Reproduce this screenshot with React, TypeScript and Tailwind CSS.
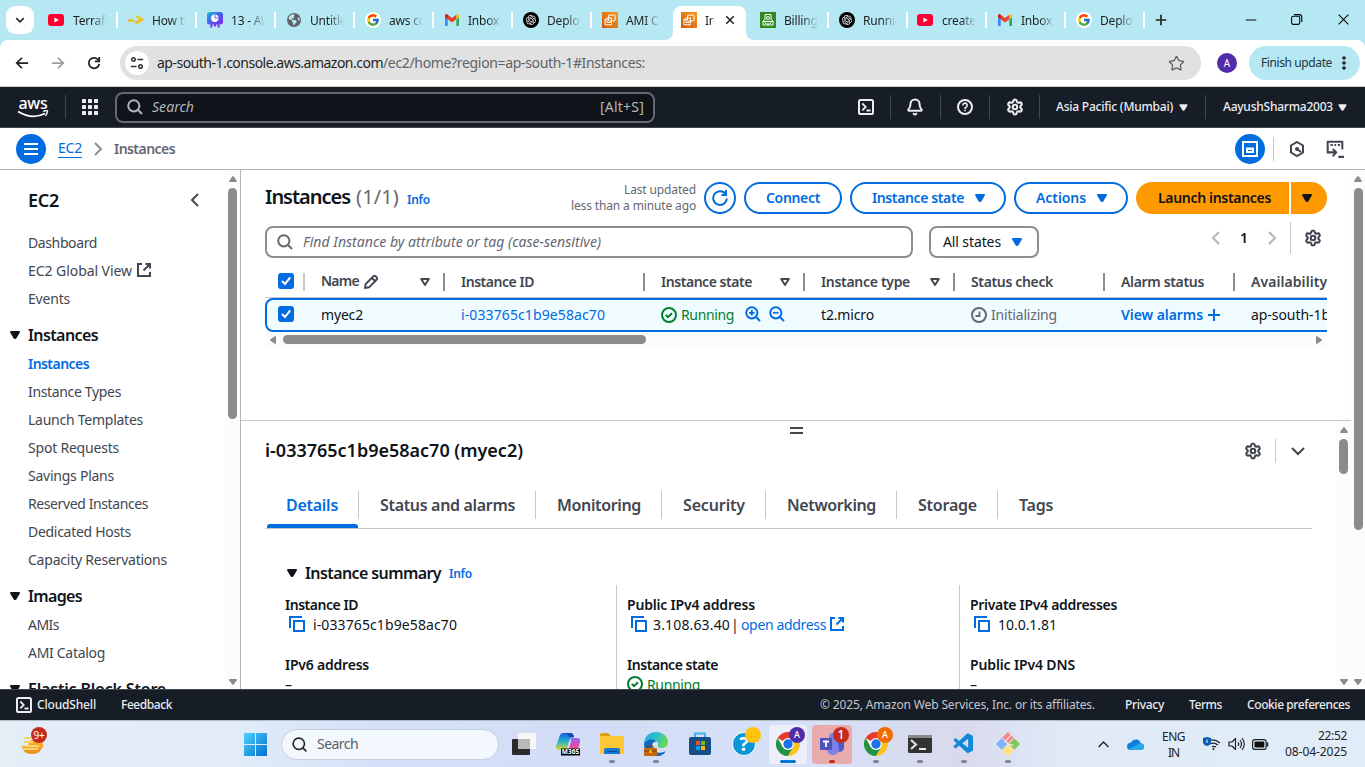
import { useLayoutEffect, useRef, useState, type ReactNode } from 'react';
import { Settings, Search as SearchIcon, Bell, Star } from 'lucide-react';
import { FcGoogle } from 'react-icons/fc';
import { RiOpenaiFill } from 'react-icons/ri';
import { FaEarthAmericas } from 'react-icons/fa6';
import { VscVscode } from 'react-icons/vsc';

/* Text fitted to a given width by letter spacing. */
function T({ w, children, className = '' }: { w: number; children: string; className?: string }) {
  const ref = useRef<HTMLSpanElement>(null);
  const [space, setSpace] = useState(0);
  useLayoutEffect(() => {
    if (ref.current) setSpace((w - ref.current.getBoundingClientRect().width) / children.length);
  }, [w, children]);
  return (
    <span className={`block shrink-0 whitespace-nowrap ${className}`} style={{ width: w }}>
      <span ref={ref} className="inline-block whitespace-pre" style={{ letterSpacing: space }}>{children}</span>
    </span>
  );
}

function Icon({ children, size = 16, className = '', sw = 2 }: { children: ReactNode; size?: number; className?: string; sw?: number }) {
  return (
    <svg viewBox="0 0 16 16" width={size} height={size} fill="none" stroke="currentColor" strokeWidth={sw} className={`block shrink-0 ${className}`}>
      {children}
    </svg>
  );
}
const Caret = ({ className = '', size = 16 }: { className?: string; size?: number }) => (
  <Icon size={size} className={className}><path d="M4 5h8l-3.6 6h-.8z" fill="currentColor" strokeWidth="2" strokeLinejoin="round" /></Icon>
);
const SortCaret = ({ className = '' }: { className?: string }) => (
  <Icon className={className}><path d="M4.2 5h7.6L8 11z" strokeLinejoin="round" /></Icon>
);
const External = ({ className = '' }: { className?: string }) => (
  <Icon className={className}><path d="M14 10v4H2V2h4M9.5 2H14v4.5M14 2 7.5 8.5" /></Icon>
);
const Magnifier = ({ className = '', children }: { className?: string; children?: ReactNode }) => (
  <Icon className={className}><circle cx="6.8" cy="6.8" r="5.6" /><path d="m11 11 4 4" />{children}</Icon>
);
const Shell = () => (
  <Icon><rect x="1" y="1" width="14" height="14" rx="1.6" /><path d="m4.3 4.5 3.4 3.4-3.4 3.4M8.5 11.5h4" strokeWidth="1.8" /></Icon>
);
const Copy = () => (
  <Icon className="text-[#006ce0]"><path d="M1 12V1h12" /><rect x="5" y="5" width="10" height="10" /></Icon>
);
const Running = ({ textClass = '' }: { textClass?: string }) => (
  <div className="flex items-center text-[#00802f]">
    <Icon><circle cx="8" cy="8" r="7" /><path d="m4.8 8 2.2 2.2 4-4" /></Icon>
    <T w={53} className={`ml-1 ${textClass}`}>Running</T>
  </div>
);
const Check = ({ className = '' }: { className?: string }) => (
  <div className={`flex h-4 w-4 shrink-0 items-center justify-center rounded-[3px] bg-[#006ce0] text-white ${className}`}>
    <Icon><path d="m4 8 3 3 5.2-6.6" /></Icon>
  </div>
);
const Chevron = ({ d, className = '', size = 16 }: { d: string; className?: string; size?: number }) => (
  <Icon className={className} size={size}><path d={d} /></Icon>
);
const Arrow = ({ dir }: { dir: 'up' | 'down' | 'left' | 'right' }) => (
  <svg viewBox="0 0 10 8" width="10" height="8" className={`block ${{ up: '', down: 'rotate-180', left: '-rotate-90', right: 'rotate-90' }[dir]}`}>
    <path d="M4.3 1.4Q5 .5 5.7 1.4L8.8 5.8Q9.2 7 8 7H2Q.8 7 1.2 5.8Z" fill="#8b8b8b" />
  </svg>
);

/* ---------- browser ---------- */
const YouTube = () => (
  <svg viewBox="0 0 16 16" width="16" height="16" className="-ml-[2px] shrink-0"><rect y="2" width="16" height="12" rx="3" fill="#ff0033" /><path d="m6.4 5.4 4.4 2.6-4.4 2.6z" fill="#fff" /></svg>
);
const Gmail = () => (
  <svg viewBox="0 0 16 16" width="16" height="16"><path d="M1 14h2.7V7.3L1 5z" fill="#4285f4" /><path d="M12.3 14H15V5l-2.7 2.3z" fill="#34a853" /><path d="M1 5.2V4c0-1.7 1.7-2 2.7-1.3L8 6l4.3-3.3v4.6L8 10.5 3.7 7.3z" fill="#ea4335" /><path d="M12.3 7.3V2.7C13.5 1.9 15 2.5 15 4v1.3z" fill="#fbbc04" /><path d="M1 5.2V4c0-1.5 1.5-2.1 2.7-1.3v4.6z" fill="#c5221f" /></svg>
);
const Google = () => <div className="flex h-4 w-4 items-center justify-center rounded-full bg-white"><FcGoogle size={14} /></div>;
const OpenAI = () => <div className="flex h-4 w-4 items-center justify-center rounded-full bg-black"><RiOpenaiFill size={12} color="#fff" /></div>;
const Ec2 = () => (
  <svg viewBox="0 0 16 16" width="16" height="16" fill="none" stroke="#fff" strokeWidth="1"><defs><linearGradient id="ec2" x1="0" y1="1" x2="1" y2="0"><stop stopColor="#cc5a10" /><stop offset="1" stopColor="#f99a1c" /></linearGradient></defs><rect width="16" height="16" fill="url(#ec2)" stroke="none" /><rect x="6.5" y="3" width="6.5" height="6" rx="1" /><path d="M9.5 11.5v1.3h-6.500V7h1.500" /><path d="M5 6h4.500v4.500H5z" /></svg>
);
const Billing = () => (
  <svg viewBox="0 0 16 16" width="16" height="16" fill="none" stroke="#fff" strokeWidth="1"><rect width="16" height="16" fill="#2f8a22" stroke="none" /><path d="M5 8V2.500h6V8M3 9.500h10M3 13h10M3 9.500l1.500-2M13 9.500l-1.500-2M3 9.500V13M13 9.500V13M5 10.500l1 1.500h4l1-1.500" /><circle cx="8" cy="6" r="1.500" /></svg>
);
const Slides = () => (
  <svg viewBox="0 0 16 16" width="16" height="16"><defs><linearGradient id="sl" x1="0" y1="0" x2="1" y2="1"><stop stopColor="#10bfd0" /><stop offset=".55" stopColor="#4f56f0" /><stop offset="1" stopColor="#8a2be8" /></linearGradient></defs><rect width="16" height="12.500" rx="2.500" fill="url(#sl)" /><path d="m5 12-1 3.500M11 12l1 3.500M8 12v2.500" stroke="#7b36ec" strokeWidth="2" /><circle cx="7.800" cy="6.300" r="3.700" fill="#fff" /><path d="M8 6V3M8 6h3" stroke="#4c6bf0" strokeWidth="1" /></svg>
);
const Dash = () => (
  <svg viewBox="0 0 16 16" width="16" height="16" fill="none" strokeWidth="2"><path d="M0 8.500h6M7 10.500l7-3" stroke="#f7b500" /><path d="m8 4 6.500 3.500L8 12" stroke="#fbbf24" /></svg>
);
const tabs: [string, ReactNode][] = [
  ['Terrafor', <YouTube />], ['How to', <Dash />], ['13 - AW', <Slides />], ['Untitled', <FaEarthAmericas size={14} color="#5f6368" />],
  ['aws con', <Google />], ['Inbox (', <Gmail />], ['Deploy', <OpenAI />], ['AMI Ca', <Ec2 />], ['Ins', <Ec2 />], ['Billing a', <Billing />],
  ['Runnin', <OpenAI />], ['create e', <YouTube />], ['Inbox (', <Gmail />], ['Deploy', <Google />],
];

function TabStrip() {
  return (
    <div className="flex h-10 shrink-0 items-end bg-[#b5e8f3]">
      <div className="mb-[6px] ml-[6px] flex h-7 w-7 items-center justify-center rounded-[9px] bg-white"><Chevron size={12} d="m3 5.500 5 5 5-5" className="text-[#222]" /></div>
      <div className="ml-[3px] flex">
        {tabs.map(([name, icon], i) => {
          const active = i === 8;
          return (
            <div key={i} className="relative flex h-[34px] w-[79px] items-center pb-[6px] pl-3">
              {i > 0 && i !== 8 && i !== 9 && <div className="absolute top-[6px] left-0 h-4 w-[2px] bg-white" />}
              {active && (
                <svg viewBox="0 0 90 34" width="90" height="34" className="absolute top-0 left-[-5px]"><path d="M0 34Q9 34 9 25V9Q9 0 18 0H73Q82 0 82 9V25Q82 34 91 34z" fill="#fff" /></svg>
              )}
              <div className="relative flex h-4 w-4 items-center justify-center">{icon}</div>
              <div className={`relative mt-[2px] ml-2 overflow-hidden text-[12px] leading-4 tracking-[-0.2px] whitespace-nowrap text-[#1f1f1f] [mask-image:linear-gradient(90deg,#000_55%,transparent)] ${active ? 'w-[10px]' : 'w-[34px]'}`}>{name}</div>
              {active && <Icon size={12} className="relative ml-[9px] text-[#222]"><path d="m3 3 10 10M13 3 3 13" /></Icon>}
            </div>
          );
        })}
      </div>
      <div className="flex h-[34px] items-start"><div className="mt-[6px] h-4 w-[2px] bg-white" /></div>
      <Icon size={12} className="mb-[14px] ml-[10px] text-[#222]"><path d="M8 1v14M1 8h14" strokeWidth="2.200" /></Icon>
      <div className="mb-[14px] ml-[78px] flex items-center gap-[33px] text-black">
        <Icon size={12} sw={1.300}><path d="M1 8h14" /></Icon>
        <Icon size={13} sw={1.300}><rect x="2" y="4" width="10" height="10" rx="2" /><path d="M5 2h6q3.500 0 3.500 3.500V11" /></Icon>
        <Icon size={13} sw={1.300} className="ml-px"><path d="m2 2 12 12M14 2 2 14" /></Icon>
      </div>
    </div>
  );
}

function Toolbar() {
  return (
    <div className="shrink-0 bg-[#b5e8f3]">
      <div className="flex h-[47px] items-center rounded-t-[8px] border-b border-[#c9c9c9] bg-white">
        <Icon size={14} sw={2} className="ml-[15px] text-[#222]"><path d="M15 8H2M8 2 2 8l6 6" /></Icon>
        <Icon size={14} sw={2} className="ml-[22px] text-[#9a9a9a]"><path d="M1 8h13M8 2l6 6-6 6" /></Icon>
        <Icon size={14} sw={2} className="ml-[22px] text-[#222]"><path d="M14 9A6 6 0 1 1 12.500 4L14 6M14 1v5H9" /></Icon>
        <div className="ml-[19px] flex h-[34px] w-[1081px] items-center rounded-full bg-[#e1e1e1]">
          <div className="ml-[5px] flex h-6 w-6 items-center justify-center rounded-full bg-white text-[#333]">
            <Icon size={14} sw={1.800}><circle cx="4" cy="4" r="2" /><path d="M8.500 4H15M1 12h6.500" /><circle cx="12" cy="12" r="2" /></Icon>
          </div>
          <T w={226} className="-mt-[2px] ml-2 text-[14px] text-[#1f1f1f]">ap-south-1.console.aws.amazon.com</T>
          <T w={262} className="-mt-[2px] text-[14px] text-[#5f6368]">/ec2/home?region=ap-south-1#Instances:</T>
          <Star size={17} strokeWidth={1.900} color="#5f6368" className="ml-[523px]" />
        </div>
        <div className="ml-4 flex h-5 w-5 items-center justify-center rounded-full bg-[#512da8] text-[10px] text-white">A</div>
        <div className="ml-3 flex h-[34px] w-[111px] items-center rounded-full bg-[#b5e8f3] text-[12px] text-[#26363a]">
          <T w={71} className="ml-3">Finish update</T>
          <svg width="4" height="16" className="ml-[10px]" fill="#222"><circle cx="2" cy="3" r="1.800" /><circle cx="2" cy="8" r="1.800" /><circle cx="2" cy="13" r="1.800" /></svg>
        </div>
      </div>
    </div>
  );
}

/* ---------- console ---------- */
const NavLine = ({ className }: { className: string }) => <div className={`h-6 w-px bg-[#424650] ${className}`} />;

function AwsNav() {
  return (
    <div className="flex h-[41px] shrink-0 items-center border-b border-[#424650] bg-[#161d26] text-[#ebebf0]">
      <div className="ml-[17px] flex w-[32px] flex-col items-center">
        <T w={29} className="text-[16px] leading-[12px] font-medium text-white">aws</T>
        <svg viewBox="0 0 32 8" width="32" height="8" fill="none" stroke="#fff" className="mt-[1px]"><path d="M1 1.500Q15 10 28 3.500" strokeWidth="1.800" /><path d="M26 1.500Q31-.5 30.500 1.500T28.500 6" strokeWidth="1.300" /></svg>
      </div>
      <NavLine className="ml-4" />
      <svg width="16" height="16" className="ml-4" fill="#ebebf0">{[0, 6, 12].map(y => [0, 6, 12].map(x => <rect key={`${x}${y}`} x={x} y={y} width="4" height="4" rx=".6" />))}</svg>
      <div className="ml-[17px] flex h-[31px] w-[540px] items-center rounded-[8px] border-2 border-[#656871] bg-[#0f141a] text-[14px] text-[#b4b4bb]">
        <Magnifier className="ml-[10px]" />
        <T w={42} className="-mt-px ml-[9px] italic">Search</T>
        <T w={44} className="-mt-px ml-[406px]">[Alt+S]</T>
      </div>
      <div className="ml-[203px]"><Shell /></div>
      <NavLine className="ml-4" />
      <Bell size={18} strokeWidth={2.700} className="ml-[15px]" />
      <NavLine className="ml-4" />
      <Icon className="ml-4"><circle cx="8" cy="8" r="7" /><path d="M5.800 6.500a2.200 2.200 0 1 1 3.300 1.800Q8 9 8 10M8 10.800v1.500" strokeWidth="1.700" /></Icon>
      <NavLine className="ml-4" />
      <Settings size={18} strokeWidth={2.800} className="ml-4" />
      <NavLine className="ml-[15px]" />
      <T w={117} className="ml-4 text-[12px] font-medium">Asia Pacific (Mumbai)</T>
      <Caret size={13} className="ml-[4px]" />
      <NavLine className="ml-[15px]" />
      <T w={110} className="ml-[17px] text-[12px] font-medium">AayushSharma2003</T>
      <Caret size={13} className="ml-[3px]" />
    </div>
  );
}

function Breadcrumb() {
  return (
    <div className="flex h-[42px] shrink-0 items-center border-b border-[#b4b4bb] text-[14px]">
      <div className="ml-4 flex h-[30px] w-[30px] items-center justify-center rounded-full bg-[#006ce0] text-white"><Icon><path d="M1 3h14M1 8h14M1 13h14" /></Icon></div>
      <T w={24} className="ml-3 border-b border-[#006ce0] leading-[18px] text-[#006ce0]">EC2</T>
      <Chevron className="ml-2 text-[#8c8c94]" d="m5 2 6 6-6 6" />
      <T w={61} className="ml-2 font-semibold text-[#656871]">Instances</T>
      <div className="ml-[1060px] flex h-[30px] w-[30px] items-center justify-center rounded-full bg-[#006ce0] text-white"><Icon><path d="M1 1h14v14H1z" /><path d="M5 8h6v3H5zM4 7.500h8" /></Icon></div>
      <div className="ml-2 h-6 w-px bg-[#c6c6cd]" />
      <Icon className="ml-[15px] text-[#424650]"><path d="m8 1 6 3.500v7L8 15l-6-3.500v-7z" /><circle cx="8" cy="8" r="2" fill="currentColor" stroke="none" /><path d="m8 8 4 3" /></Icon>
      <Icon size={18} className="ml-[21px] text-[#424650]" sw={1.800}><path d="M4 11H1.500V1.500h13v7M4 4.500h2M7.500 4.500h1.500M10.500 4.500h2M4 11h4M6 8l3 3-3 3.500M11 15h5" /></Icon>
    </div>
  );
}

const Link = ({ w, children }: { w: number; children: string }) => <div className="flex h-7 items-center pl-7"><T w={w}>{children}</T></div>;
const Group = ({ w, children, className = '' }: { w: number; children: string; className?: string }) => (
  <div className={`flex h-[29px] items-center pl-[7px] text-[16px] font-semibold text-[#0f141a] ${className}`}><Caret /><T w={w} className="ml-[5px]">{children}</T></div>
);

function Sidebar() {
  return (
    <div className="flex h-full w-[241px] shrink-0 border-r border-[#b4b4bb]">
      <div className="h-full w-[225px] overflow-hidden text-[14px] text-[#424650]">
        <div className="flex h-[58px] items-center pt-[2px] pl-7 text-[18px] font-semibold text-[#0f141a]"><T w={31} className="mt-px">EC2</T><Chevron className="ml-32 text-[#424650]" d="M11 2 5 8l6 6" /></div>
        <Link w={69}>Dashboard</Link>
        <div className="flex h-7 items-center pl-7"><T w={104}>EC2 Global View</T><External className="ml-1" /></div>
        <Link w={42}>Events</Link>
        <Group w={70} className="mt-2">Instances</Group>
        <div className="flex h-7 items-center pl-7 font-semibold text-[#006ce0]"><T w={61}>Instances</T></div>
        <Link w={93}>Instance Types</Link>
        <Link w={115}>Launch Templates</Link>
        <Link w={91}>Spot Requests</Link>
        <Link w={86}>Savings Plans</Link>
        <Link w={120}>Reserved Instances</Link>
        <Link w={103}>Dedicated Hosts</Link>
        <Link w={139}>Capacity Reservations</Link>
        <Group w={54} className="mt-2">Images</Group>
        <Link w={31}>AMIs</Link>
        <Link w={77}>AMI Catalog</Link>
        <Group w={138} className="mt-2">Elastic Block Store</Group>
      </div>
      <div className="flex w-[15px] flex-col items-center bg-[#fcfcfc] pt-[5px] pb-[3px]"><Arrow dir="up" /><div className="mt-[5px] h-[231px] w-[9px] rounded-full bg-[#8b8b8b]" /><div className="mt-auto"><Arrow dir="down" /></div></div>
    </div>
  );
}

const btn = 'flex h-8 shrink-0 items-center rounded-full border-2 border-[#006ce0] text-[14px] font-semibold text-[#006ce0]';

function InstancesHeader() {
  return (
    <>
      <div className="mt-3 ml-6 flex h-8 items-center">
        <T w={85} className="-mt-[2px] text-[20px] font-semibold text-[#0f141a]">Instances</T>
        <T w={43} className="-mt-[2px] ml-[6px] text-[20px] text-[#656871]">(1/1)</T>
        <T w={23} className="mt-1 ml-2 text-[12px] font-semibold text-[#006ce0]">Info</T>
        <div className="ml-[141px] flex flex-col items-end text-[12px] leading-4 text-[#656871]"><T w={72}>Last updated</T><T w={125}>less than a minute ago</T></div>
        <div className={`${btn} ml-2 w-8 justify-center`}><Icon><path d="M14.800 8.500A6.800 6.800 0 1 1 13.800 4.500M9.500 5H14V0" /></Icon></div>
        <div className={`${btn} ml-2 w-[98px] justify-center`}><T w={54} className="-mt-[2px]">Connect</T></div>
        <div className={`${btn} ml-2 w-[156px]`}><T w={92} className="-mt-[2px] ml-5">Instance state</T><Caret className="ml-2" /></div>
        <div className={`${btn} ml-2 w-[114px]`}><T w={50} className="-mt-[2px] ml-5">Actions</T><Caret className="ml-2" /></div>
        <div className="ml-2 flex h-8 w-[153px] items-center justify-center rounded-l-full bg-[#ff9900] text-[14px] font-semibold text-[#0f141a]"><T w={113} className="-mt-[2px] ml-1">Launch instances</T></div>
        <div className="ml-[2px] flex h-8 w-9 items-center rounded-r-full bg-[#ff9900] pl-2 text-[#0f141a]"><Caret /></div>
      </div>
      <div className="mt-3 ml-6 flex h-8 text-[14px]">
        <div className="flex h-8 w-[648px] items-center rounded-[8px] border-2 border-[#8c8c94] text-[#656871]"><Magnifier className="ml-[10px]" /><T w={298} className="-mt-[2px] ml-[10px] italic">Find Instance by attribute or tag (case-sensitive)</T></div>
        <div className="ml-4 flex h-8 w-[110px] items-center rounded-[8px] border-2 border-[#8c8c94] text-[#0f141a]"><T w={58} className="-mt-[2px] ml-[12px]">All states</T><Caret className="ml-2 text-[#006ce0]" /></div>
        <div className="-mt-1 ml-[169px] flex h-8 items-center">
          <Chevron className="text-[#b4b4bb]" d="M11 2 5 8l6 6" />
          <div className="-mt-[2px] w-10 text-center font-semibold text-[#0f141a]">1</div>
          <Chevron className="text-[#b4b4bb]" d="m5 2 6 6-6 6" />
          <div className="ml-[10px] h-8 w-px bg-[#c6c6cd]" />
          <Settings size={18} strokeWidth={2.800} className="ml-[13px] text-[#424650]" />
        </div>
      </div>
    </>
  );
}

const Th = ({ w, children, sort, className }: { w: number; children: string; sort?: boolean; className: string }) => (
  <div className={`flex h-[34px] shrink-0 items-center pt-[2px] pl-4 ${className}`}><T w={w}>{children}</T><div className="ml-auto flex items-center gap-[10px]">{sort && <SortCaret />}<div className="h-[18px] w-[2px] bg-[#8c8c94]" /></div></div>
);

function InstancesTable() {
  return (
    <div className="mt-[6px] ml-6 w-[1062px] overflow-hidden text-[14px]">
      <div className="flex h-[34px] w-[1180px] items-center border-b border-[#c6c6cd] font-semibold text-[#424650]">
        <div className="flex w-10 shrink-0 items-center"><Check className="ml-[13px]" /><div className="mt-[2px] ml-[9px] h-[18px] w-[2px] bg-[#c6c6cd]" /></div>
        <div className="flex w-[140px] shrink-0 items-center pl-4">
          <T w={38}>Name</T><Icon className="mt-[2px] ml-1" sw={1.900}><path d="m2 14 .7-4L10.500 2.200q1-.9 2 0l1.300 1.300q.9 1 0 2L6 13.300zM9 4l3 3" strokeLinejoin="round" /></Icon>
          <div className="mt-[2px] ml-auto flex items-center gap-[10px]"><SortCaret /><div className="h-[18px] w-[2px] bg-[#8c8c94]" /></div>
        </div>
        <Th w={73} className="w-[200px]">Instance ID</Th>
        <Th w={91} sort className="w-40">Instance state</Th>
        <Th w={89} sort className="w-[150px]">Instance type</Th>
        <Th w={82} className="w-[150px]">Status check</Th>
        <Th w={83} className="w-[130px]">Alarm status</Th>
        <Th w={114} className="w-[180px]">Availability Zone</Th>
      </div>
      <div className="flex h-[34px] w-[1180px] items-center rounded-[8px] border-2 border-[#006ce0] bg-[#f0fbff] text-[#0f141a]">
        <Check className="-mt-[2px] ml-[11px]" />
        <T w={42} className="-mt-[2px] ml-[27px]">myec2</T>
        <T w={144} className="-mt-[2px] ml-[98px] text-[#006ce0]">i-033765c1b9e58ac70</T>
        <div className="ml-14 flex items-center"><Running textClass="-mt-[2px]" /></div>
        <Magnifier className="-mt-[2px] ml-[11px] text-[#006ce0]"><path d="M4 6.800h5.600M6.800 4v5.600" strokeWidth="1.800" /></Magnifier>
        <Magnifier className="-mt-[2px] ml-2 text-[#006ce0]"><path d="M4 6.800h5.600" strokeWidth="1.800" /></Magnifier>
        <T w={53} className="-mt-[2px] ml-[36px]">t2.micro</T>
        <div className="ml-[97px] flex items-center text-[#656871]"><Icon><circle cx="8" cy="8" r="7" /><path d="M8.500 4.500V9H4.500" strokeWidth="1.800" /></Icon><T w={66} className="-mt-[2px] ml-1">Initializing</T></div>
        <T w={82} className="-mt-[2px] ml-16 font-semibold text-[#006ce0]">View alarms</T>
        <Icon className="ml-[3px] text-[#006ce0]"><path d="M8 2v12M2 8h12" /></Icon>
        <T w={79} className="-mt-[2px] ml-[29px]">ap-south-1b</T>
      </div>
      <div className="flex h-[15px] items-center bg-[#fcfcfc]"><div className="ml-[3px]"><Arrow dir="left" /></div><div className="ml-[5px] h-[9px] w-[363px] rounded-full bg-[#8b8b8b]" /><div className="mr-[3px] ml-auto"><Arrow dir="right" /></div></div>
    </div>
  );
}

const detailTabs: [string, number, string, string][] = [
  ['Status and alarms', 135, 'w-[177px]', ''], ['Monitoring', 84, 'w-[126px]', ''], ['Security', 62, 'w-[104px]', ''],
  ['Networking', 89, 'w-[131px]', ''], ['Storage', 59, 'w-[101px]', ''], ['Tags', 34, 'w-[80px]', 'end'],
];

function Details() {
  const label = 'flex h-5 items-center font-semibold';
  const value = 'flex h-5 items-center';
  return (
    <div className="flex min-h-0 flex-1 border-t border-[#c6c6cd]">
      <div className="min-w-0 flex-1 overflow-hidden text-[14px] text-[#0f141a]">
        <div className="mt-[6px] ml-[549px] flex h-[7px] w-[13px] flex-col justify-between"><div className="h-[2px] bg-[#424650]" /><div className="h-[2px] bg-[#424650]" /></div>
        <div className="mt-[5px] ml-6 flex h-6 items-center">
          <T w={258} className="-mt-[2px] text-[18px] font-semibold">i-033765c1b9e58ac70 (myec2)</T>
          <Settings size={18} strokeWidth={2.800} className="ml-[721px] text-[#424650]" />
          <div className="ml-[13px] h-6 w-px bg-[#c6c6cd]" />
          <Chevron className="ml-[14px] text-[#424650]" d="m2 5 6 6 6-6" />
        </div>
        <div className="mt-[17px] ml-6 flex h-[49px] w-[1047px] border-b border-[#c6c6cd] text-[16px] font-semibold text-[#424650]">
          <div className="ml-[2px] flex w-[92px] flex-col text-[#006ce0]">
            <div className="mt-[11px] flex h-[28px] items-center justify-between border-r border-[#c6c6cd]"><T w={52} className="ml-[19px]">Details</T></div>
            <div className="mt-auto h-1 w-[91px] rounded-t-[3px] bg-[#006ce0]" />
          </div>
          {detailTabs.map(([name, w, cls, end]) => (
            <div key={name} className={`mt-[11px] flex h-[28px] items-center ${cls} ${end ? '' : 'border-r border-[#c6c6cd]'}`}><T w={w} className="ml-[21px]">{name}</T></div>
          ))}
        </div>
        <div className="mt-[32px] ml-[43px] flex h-6 items-center"><Caret /><T w={136} className="-mt-px ml-[5px] text-[16px] font-semibold">Instance summary</T><T w={23} className="mt-[2px] ml-2 text-[12px] font-semibold text-[#006ce0]">Info</T></div>
        <div className="ml-[44px] flex h-[120px]">
          <div className="w-[332px] border-r border-[#c6c6cd] pt-[9px]">
            <div className={label}><T w={73}>Instance ID</T></div>
            <div className={`${value} pl-1`}><Copy /><T w={144} className="ml-2">i-033765c1b9e58ac70</T></div>
            <div className={`${label} mt-5`}><T w={84}>IPv6 address</T></div>
            <div className={value}>–</div>
          </div>
          <div className="w-[343px] border-r border-[#c6c6cd] pt-[9px] pl-[10px]">
            <div className={label}><T w={128}>Public IPv4 address</T></div>
            <div className={`${value} pl-1`}><Copy /><T w={77} className="ml-[6px]">3.108.63.40</T><T w={8} className="ml-px">|</T><T w={85} className="ml-[2px] text-[#006ce0]">open address</T><External className="ml-[3px] text-[#006ce0]" /></div>
            <div className={`${label} mt-5`}><T w={91}>Instance state</T></div>
            <div className={value}><Running /></div>
          </div>
          <div className="pt-[9px] pl-[10px]">
            <div className={label}><T w={147}>Private IPv4 addresses</T></div>
            <div className={`${value} pl-1`}><Copy /><T w={59} className="ml-2">10.0.1.81</T></div>
            <div className={`${label} mt-5`}><T w={105}>Public IPv4 DNS</T></div>
            <div className={value}>–</div>
          </div>
        </div>
      </div>
      <div className="flex w-[15px] shrink-0 flex-col items-center bg-[#fcfcfc] pt-[5px] pb-[3px]"><Arrow dir="up" /><div className="mt-[5px] h-[35px] w-[9px] rounded-full bg-[#8b8b8b]" /><div className="mt-auto"><Arrow dir="down" /></div></div>
    </div>
  );
}

function Footer() {
  return (
    <div className="flex h-[31px] shrink-0 items-center border-t border-[#424650] bg-[#161d26] text-[12px] font-medium text-[#ebebf0]">
      <div className="ml-4"><Shell /></div>
      <T w={59} className="ml-[5px]">CloudShell</T>
      <T w={51} className="ml-[25px]">Feedback</T>
      <T w={275} className="ml-[648px] font-normal text-[#c6c6cd]">© 2025, Amazon Web Services, Inc. or its affiliates.</T>
      <T w={39} className="ml-[30px]">Privacy</T>
      <T w={33} className="ml-[25px]">Terms</T>
      <T w={103} className="ml-[25px]">Cookie preferences</T>
    </div>
  );
}

/* ---------- taskbar ---------- */
const Chrome = () => (
  <svg viewBox="0 0 24 24" width="24" height="24"><circle cx="12" cy="12" r="12" fill="#fff" /><path d="M12 12 1.600 6A12 12 0 0 1 22.400 6z" fill="#e33b2e" /><path d="M12 0A12 12 0 0 1 22.400 6H12z" fill="#e33b2e" /><path d="M22.400 6A12 12 0 0 1 12 24l5.200-9L12 6z" fill="#fcc31e" /><path d="M12 24A12 12 0 0 1 1.600 6l5.200 9L12 18l5.200-3z" fill="#229342" /><circle cx="12" cy="12" r="6" fill="#fff" /><circle cx="12" cy="12" r="4.700" fill="#1a73e8" /></svg>
);
const Badge = ({ children, className }: { children?: string; className: string }) => (
  <div className={`absolute -top-[5px] -right-[5px] flex h-4 w-4 items-center justify-center rounded-full font-medium text-white ${className}`}>{children}</div>
);
const TaskView = () => <svg viewBox="0 0 24 24" width="24" height="24"><rect y="7" width="18" height="16" rx="1" fill="#2b2b2b" /><rect x="6" y="1" width="18" height="16" rx="1" fill="#f6f6f6" /><path d="M6 7h12v10H6z" fill="#b9b9b9" /></svg>;
const Copilot = () => (
  <svg viewBox="0 0 24 24" width="24" height="24"><defs><linearGradient id="cp1" x1="0" y1="0" x2="0" y2="1"><stop stopColor="#1b5fe0" /><stop offset=".5" stopColor="#23b5c8" /><stop offset="1" stopColor="#e3d233" /></linearGradient><linearGradient id="cp2" x1="0" y1="0" x2="0" y2="1"><stop stopColor="#9a5cf5" /><stop offset=".6" stopColor="#e84e9b" /><stop offset="1" stopColor="#f79a4b" /></linearGradient></defs><path d="M7 1h8q2 0 3 4l-4 2-3 9q-1 2-4 2H3q-4 0-3-4L4 3q1-2 3-2z" fill="url(#cp1)" /><path d="M10 1h5q2 0 3 4h-3q-3 0-3-2z" fill="#1447bd" /><path d="M16 6h5q4 0 3 4l-2 8q-1 3-4 3h-8q2-1 3-4l2-8q0-3 1-3z" fill="url(#cp2)" /><rect x="5" y="16.500" width="19" height="7" fill="#000" /><text x="14.500" y="22.400" fontSize="6.500" fontWeight="700" textAnchor="middle" fill="#fff" fontFamily="Noto Sans">M365</text></svg>
);
const Folder = () => <svg viewBox="0 0 24 24" width="24" height="24"><path d="M0 3q0-2 2-2h6l3 3v5H0z" fill="#e0a008" /><rect y="4" width="24" height="18" rx="1.500" fill="#fdc836" /><path d="M4 22v-4q0-2 2-2h12q2 0 2 2v4z" fill="#1478d4" /><path d="M7 19h10v1H7z" fill="#0a4f9e" /></svg>;
const Edge = () => (
  <svg viewBox="0 0 24 24" width="24" height="24"><defs><linearGradient id="eg" x1="0" y1="0" x2="1" y2=".3"><stop stopColor="#1faae0" /><stop offset=".6" stopColor="#2fc0c8" /><stop offset="1" stopColor="#6ad84e" /></linearGradient></defs><path d="M0 12C0 4 6 0 12 0s12 4 12 10c0 4-3 6-7 6-3 0-4-1-3-3 1-3-2-5-5-5-5 0-9 4-9 4z" fill="url(#eg)" /><path d="M0 12c2-5 10-6 13-2-5-1-6 4-4 8 2 3 8 4 13 1-3 5-8 6-12 5C4 23 0 18 0 12z" fill="#1565c0" /><rect y="16" width="13" height="8" rx="1" fill="#c5690c" /><path d="M4 16v-2h5v2M0 19h13" stroke="#7a3f08" fill="none" /><rect x="5.500" y="18" width="2" height="3" fill="#ffce3a" /></svg>
);
const Store = () => <svg viewBox="0 0 24 24" width="24" height="24"><path d="M7 5V1.500h10V5" fill="none" stroke="#39b5ee" strokeWidth="2" /><rect x="1" y="5" width="22" height="18" rx="2" fill="#174e85" /><path d="M8 9h4v4H8z" fill="#f25022" /><path d="M13 9h4v4h-4z" fill="#7fba00" /><path d="M8 14h4v4H8z" fill="#00a4ef" /><path d="M13 14h4v4h-4z" fill="#ffb900" /></svg>;
const Help = () => <div className="flex h-6 w-6 items-center justify-center rounded-full border border-white bg-[#0a96d6] text-[20px] leading-none font-bold text-white">?</div>;
const Teams = () => <svg viewBox="0 0 24 24" width="24" height="24"><circle cx="13" cy="5" r="4" fill="#7b83eb" /><circle cx="20" cy="6" r="3" fill="#5059c9" /><path d="M8 9h11v9q-1 5-6 5t-6-5z" fill="#7b83eb" /><path d="M18 9h6v7q-1 4-5 4z" fill="#5059c9" /><rect y="6" width="12" height="12" rx="1" fill="#4b53bc" /><path d="M3 9.500h6M6 9.500V15" stroke="#fff" strokeWidth="1.800" /></svg>;
const Terminal = () => <svg viewBox="0 0 24 24" width="24" height="24"><rect y="3" width="24" height="18" rx="1.500" fill="#333" /><path d="M0 6V4.500Q0 3 1.500 3h21Q24 3 24 4.500V6z" fill="#888" /><path d="m3 8 5 4.500L3 17" stroke="#ddd" strokeWidth="2.200" fill="none" /><path d="M11 17h7" stroke="#fff" strokeWidth="1.800" /></svg>;
const Git = () => <svg viewBox="0 0 24 24" width="24" height="24"><g transform="rotate(45 12 12)"><rect x="3.500" y="3.500" width="8" height="8" fill="#f88585" /><rect x="12.500" y="3.500" width="8" height="8" fill="#82c75a" /><rect x="3.500" y="12.500" width="8" height="8" fill="#80b3ff" /><rect x="12.500" y="12.500" width="8" height="8" fill="#ffe27a" /><path d="M8 3v9h5M12 12l5-3" stroke="#e9e9ef" strokeWidth="1.200" fill="none" /></g></svg>;

const apps: { icon: ReactNode; badge?: ReactNode; dot?: string; box?: string }[] = [
  { icon: <TaskView /> }, { icon: <Copilot /> }, { icon: <Folder />, dot: 'w-[6px] bg-[#7f8494]' }, { icon: <Edge />, dot: 'w-[6px] bg-[#7f8494]' },
  { icon: <Store /> }, { icon: <Help />, badge: <Badge className="bg-[#ffc20e]" /> },
  { icon: <Chrome />, badge: <Badge className="bg-[#512da8] text-[9px]">A</Badge>, dot: 'w-4 bg-[#0078d4]', box: 'w-[38px] bg-[#eceff9]' },
  { icon: <Teams />, badge: <Badge className="bg-[#c42b1c] text-[12px]">1</Badge>, dot: 'w-[6px] bg-[#c42b1c]', box: 'w-10 bg-[#e8aaab]' },
  { icon: <Chrome />, badge: <Badge className="bg-[#ef6c00] text-[9px]">A</Badge>, dot: 'w-[6px] bg-[#7f8494]' },
  { icon: <Terminal />, dot: 'w-[6px] bg-[#7f8494]' }, { icon: <VscVscode size={24} color="#1488d8" />, dot: 'w-[6px] bg-[#7f8494]' }, { icon: <Git />, dot: 'w-[6px] bg-[#7f8494]' },
];

function Taskbar() {
  return (
    <div className="flex h-[47px] shrink-0 items-center border-t border-[#b3bcc6] bg-[linear-gradient(90deg,#e3eef7_0%,#e1ecf8_17%,#d4e0f8_28%,#d3dcf6_44%,#d6e1f8_58%,#d8d9ec_70%,#e0eaf7_78%,#e0edf8_100%)] text-[#222]">
      <div className="relative -mt-[4px] ml-5 h-7 w-7">
        <svg viewBox="0 0 28 28" width="28" height="28" fill="none"><path d="M2 17h20q0 9-10 9T2 17z" fill="#ee9422" /><path d="M9 13q11-4 14 3v4H8z" fill="#f7a928" /><path d="M4 10h7M4 14h9M1 18h18M3 21h15" stroke="#f8d46e" strokeWidth="1.800" /></svg>
        <div className="absolute -top-[1px] right-px flex h-4 w-4 items-center justify-center rounded-full bg-[#c42b1c] text-[10px] tracking-[-0.3px] text-white">9+</div>
      </div>
      <svg viewBox="0 0 23 23" width="23" height="23" className="ml-[196px]"><defs><linearGradient id="win" x1="0" y1="0" x2="1" y2="1"><stop stopColor="#50d0fb" /><stop offset="1" stopColor="#0070cf" /></linearGradient></defs><path d="M0 0h11v11H0zM12 0h11v11H12zM0 12h11v11H0zM12 12h11v11H12z" fill="url(#win)" /></svg>
      <div className="ml-[14px] flex h-[31px] w-[218px] items-center rounded-full border border-[#c4cde0] bg-[#f3f7fe] text-[14px] text-[#5a5e66]"><SearchIcon size={17} strokeWidth={2.300} color="#222" className="ml-[9px]" /><T w={41} className="-mt-px ml-[9px]">Search</T></div>
      <div className="ml-[3px] flex">
        {apps.map((a, i) => (
          <div key={i} className="relative flex h-[46px] w-[44px] items-center justify-center">
            <div className={`flex h-[39px] items-center justify-center rounded-[4px] ${a.box ?? 'w-10'}`}><div className="relative">{a.icon}{a.badge}</div></div>
            {a.dot && <div className={`absolute bottom-[4px] h-[3px] rounded-full ${a.dot}`} />}
          </div>
        ))}
      </div>
      <Icon size={13} sw={1.700} className="ml-[67px]"><path d="m2 11 6-6 6 6" /></Icon>
      <svg viewBox="0 0 17 11" width="17" height="11" className="ml-[17px]"><path d="M4 11Q0 11 0 7.500 0 4 4 3.500 6 0 10 .5q3 .5 3.500 3.500Q17 4.500 17 7.700 17 11 13 11z" fill="#0f7fdb" /><path d="M2 10 13.500 4Q17 4.500 17 7.700 17 11 13 11H4z" fill="#28a8ea" /></svg>
      <div className="ml-[17px] flex w-[25px] flex-col items-center pt-px text-[12px] leading-4"><T w={23}>ENG</T><T w={11}>IN</T></div>
      <svg viewBox="0 0 18 16" width="18" height="16" className="ml-[17px]" fill="none" stroke="#222"><path d="M5 5q6-3 12 2M7 8q4-2 8 1M9 11q2-1.200 4 0" strokeWidth="1.300" /><circle cx="10.500" cy="13" r="1" fill="#222" stroke="none" /><path d="m4 1 4 1v4q0 3-4 4-4-1-4-4V2z" fill="#0a5fb4" stroke="none" /><path d="M4 3.500V7" stroke="#fff" /></svg>
      <svg viewBox="0 0 18 16" width="18" height="16" className="ml-[7px]" fill="none" stroke="#222" strokeWidth="1.200"><path d="M1 6h3l3.500-3.500v11L4 10H1zM10 6q1.500 2 0 4M12 4q3 4 0 8M14 2q4.500 6 0 12" strokeLinejoin="round" /></svg>
      <svg viewBox="0 0 17 11" width="17" height="11" className="ml-[6px]"><rect x=".6" y=".6" width="13.500" height="9.800" rx="2.200" fill="none" stroke="#222" strokeWidth="1.200" /><rect x="2.500" y="2.500" width="9.800" height="6" rx=".8" fill="#111" /><path d="M15.500 3.500v4" stroke="#222" strokeWidth="1.500" /></svg>
      <div className="ml-[15px] flex w-[63px] flex-col items-end text-[12px] leading-4"><T w={29}>22:52</T><T w={62}>08-04-2025</T></div>
    </div>
  );
}

export default function App() {
  return (
    <div className="flex h-[767px] w-[1365px] flex-col overflow-hidden bg-white font-['Noto_Sans',sans-serif]">
      <TabStrip />
      <Toolbar />
      <AwsNav />
      <Breadcrumb />
      <div className="flex h-[519px] shrink-0 overflow-hidden">
        <Sidebar />
        <div className="flex h-full w-[1110px] flex-col">
          <div className="h-[250px] shrink-0 overflow-hidden"><InstancesHeader /><InstancesTable /></div>
          <Details />
        </div>
        <div className="flex w-[14px] flex-col items-center bg-[#fcfcfc] pt-[5px] pb-[3px]"><Arrow dir="up" /><div className="mt-[5px] h-[342px] w-[9px] rounded-full bg-[#8b8b8b]" /><div className="mt-auto"><Arrow dir="down" /></div></div>
      </div>
      <Footer />
      <Taskbar />
    </div>
  );
}
